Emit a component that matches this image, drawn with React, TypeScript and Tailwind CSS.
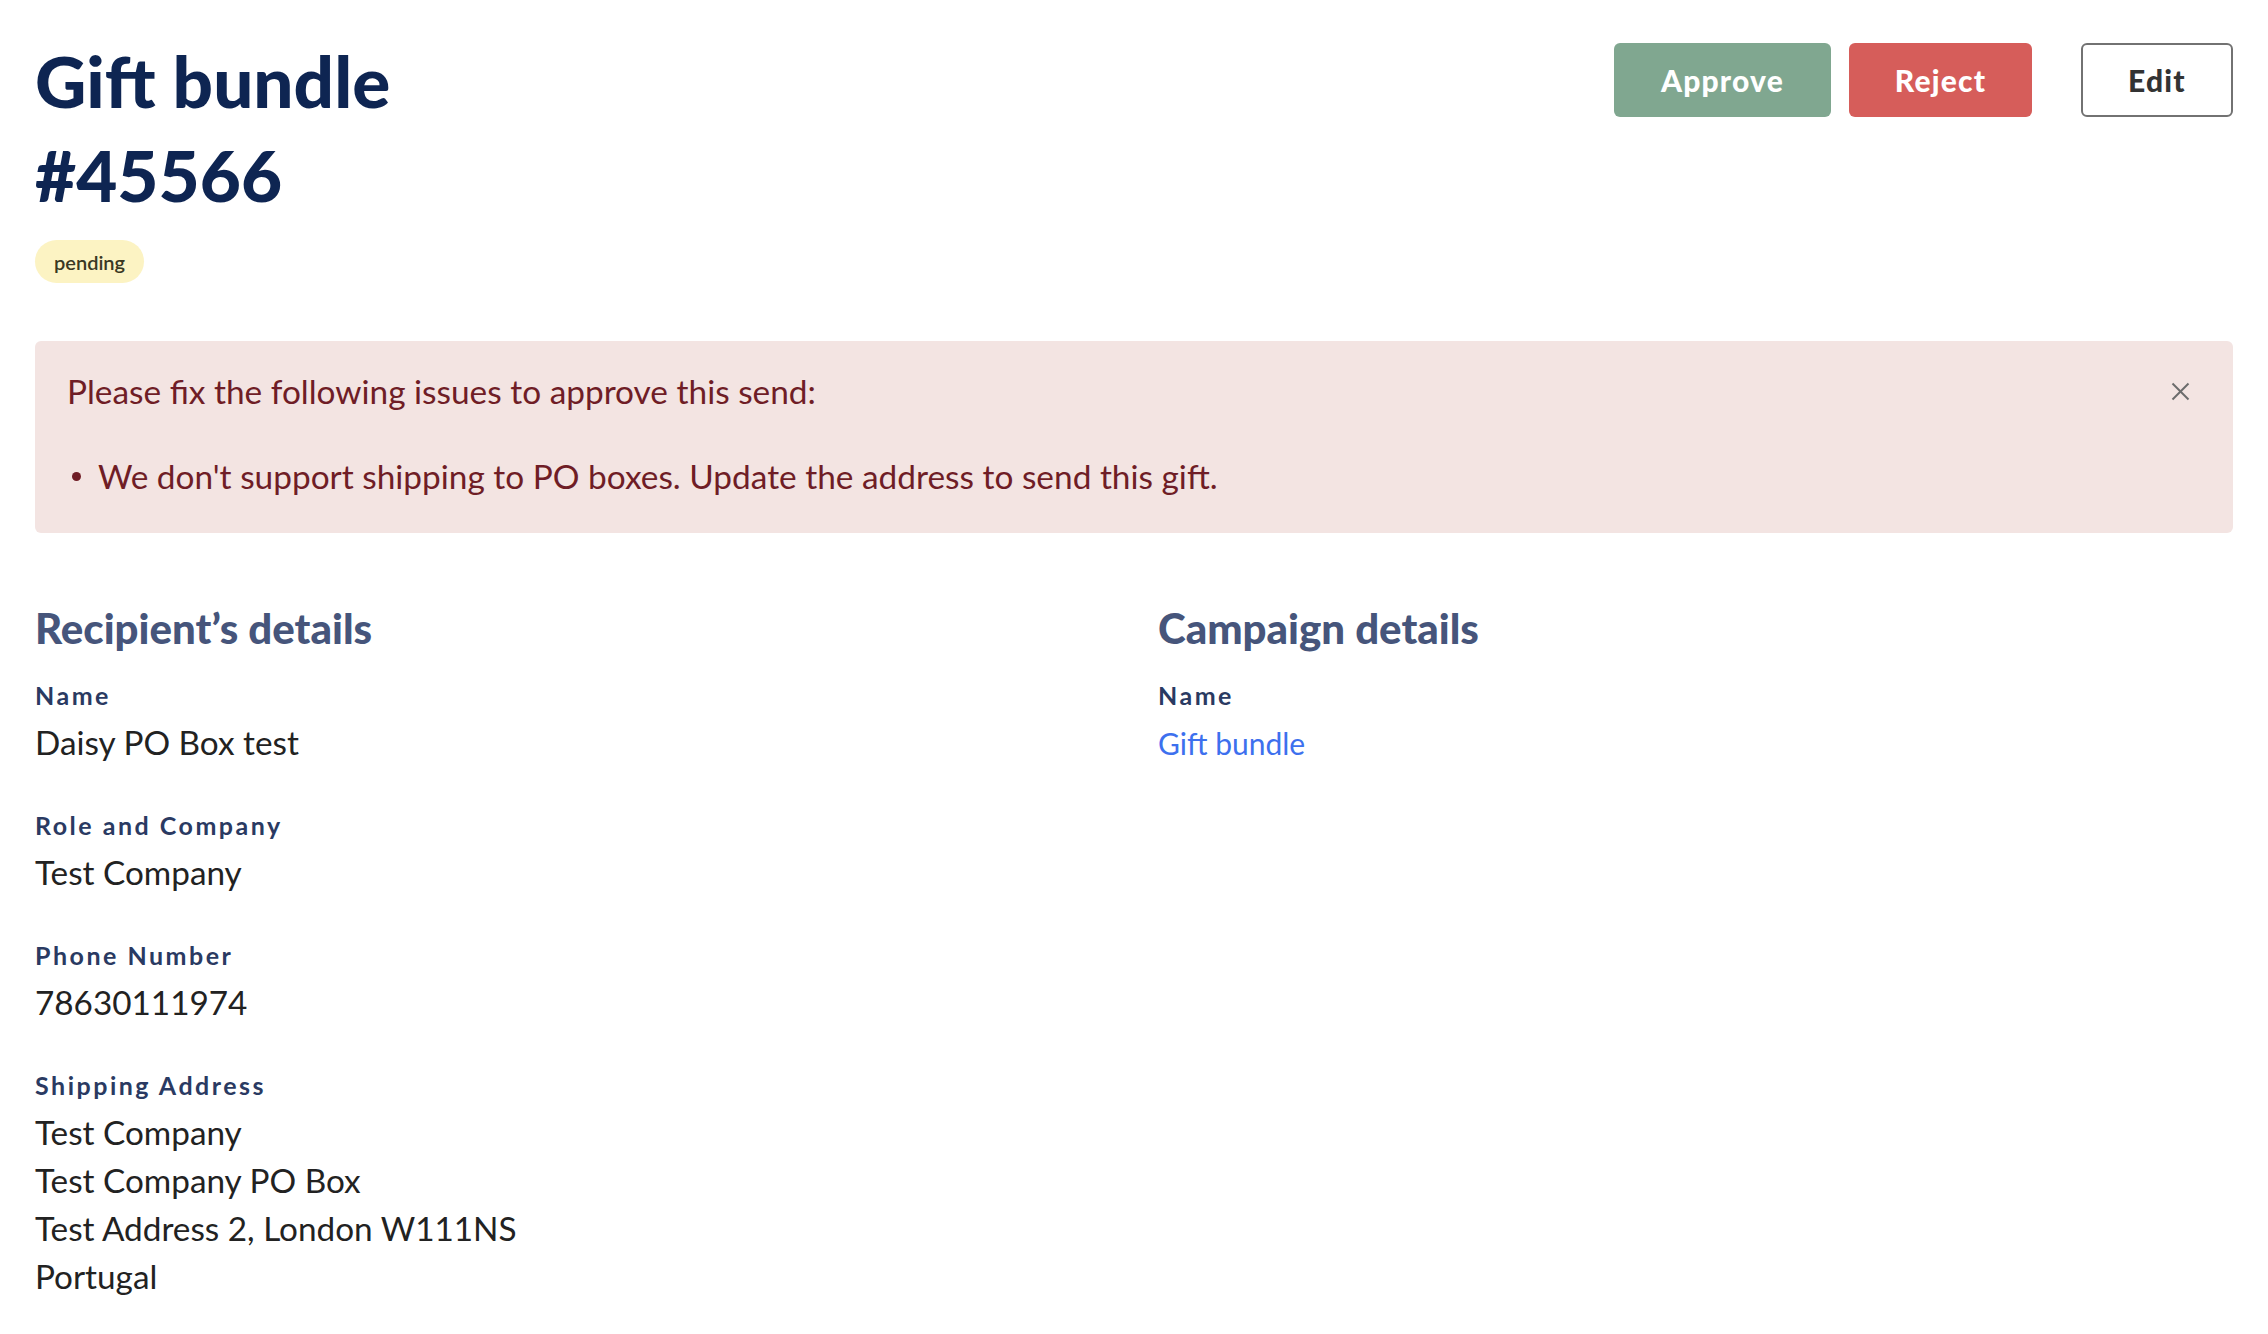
import React from "react";

function Field({ label, children }: { label: string; children: React.ReactNode }) {
  return (
    <div className="flex flex-col">
      <div className="text-[25px] leading-[32px] font-bold tracking-[0.1em] text-[#2a3a62]">{label}</div>
      <div className="mt-[7px] text-[33.3px] leading-[48px] text-[#222222]">{children}</div>
    </div>
  );
}

export default function App() {
  return (
    <div className="min-h-[1334px] bg-white px-[35px] pt-[34px] font-['Lato','Noto_Sans',sans-serif]">
      <div className="flex items-start justify-between">
        <div className="flex flex-col">
          <h1 className="w-[520px] text-[71px] leading-[94px] font-black text-[#0e2552]">Gift bundle #45566</h1>
          <div className="mt-[18px]">
            <span className="inline-flex h-[43px] items-center rounded-full bg-[#fcf3c3] px-[19px] text-[20px] font-semibold text-[#3a3823]">
              pending
            </span>
          </div>
        </div>
        <div className="mt-[9px] flex items-center">
          <button className="flex h-[74px] w-[217px] items-center justify-center rounded-[6px] bg-[#80a790] text-[30px] font-black tracking-[0.04em] text-white">
            Approve
          </button>
          <button className="ml-[18px] flex h-[74px] w-[183px] items-center justify-center rounded-[6px] bg-[#d65d5a] text-[30px] font-black tracking-[0.04em] text-white">
            Reject
          </button>
          <button className="ml-[49px] flex h-[74px] w-[152px] items-center justify-center rounded-[6px] border-2 border-[#727272] bg-white text-[30px] font-black tracking-[0.04em] text-[#333333]">
            Edit
          </button>
        </div>
      </div>

      <div className="mt-[58px] flex items-start justify-between rounded-[6px] bg-[#f3e4e2] pb-[34px] pl-[32px] pr-[43px] pt-[28px] text-[#6f1d26]">
        <div className="flex flex-col">
          <p className="text-[33.4px] leading-[45px]">Please fix the following issues to approve this send:</p>
          <ul className="mt-[40px]">
            <li className="flex items-center text-[33.4px] leading-[45px]">
              <span className="mr-[17px] ml-[5px] inline-block h-[9px] w-[9px] rounded-full bg-[#6f1d26]" />
              We don't support shipping to PO boxes. Update the address to send this gift.
            </li>
          </ul>
        </div>
        <button className="mt-[13px] text-[#6b6b6b]" aria-label="Close">
          <svg width="19" height="19" viewBox="0 0 19 19" fill="none" stroke="currentColor" strokeWidth="2">
            <line x1="1.5" y1="1.5" x2="17.5" y2="17.5" />
            <line x1="17.5" y1="1.5" x2="1.5" y2="17.5" />
          </svg>
        </button>
      </div>

      <div className="mt-[71px] grid grid-cols-2 gap-[48px]">
        <section className="flex flex-col">
          <h2 className="text-[42px] leading-[48px] font-black text-[#46557b]">Recipient’s details</h2>
          <div className="mt-[27px] flex flex-col gap-[43px]">
            <Field label="Name">Daisy PO Box test</Field>
            <Field label="Role and Company">Test Company</Field>
            <Field label="Phone Number">78630111974</Field>
            <Field label="Shipping Address">
              <div>Test Company</div>
              <div>Test Company PO Box</div>
              <div>Test Address 2, London W111NS</div>
              <div>Portugal</div>
            </Field>
          </div>
        </section>
        <section className="flex flex-col">
          <h2 className="text-[42px] leading-[48px] font-black text-[#46557b]">Campaign details</h2>
          <div className="mt-[27px] flex flex-col gap-[43px]">
            <Field label="Name">
              <a href="#" className="text-[30px] text-[#3d70ee]">Gift bundle</a>
            </Field>
          </div>
        </section>
      </div>
    </div>
  );
}
